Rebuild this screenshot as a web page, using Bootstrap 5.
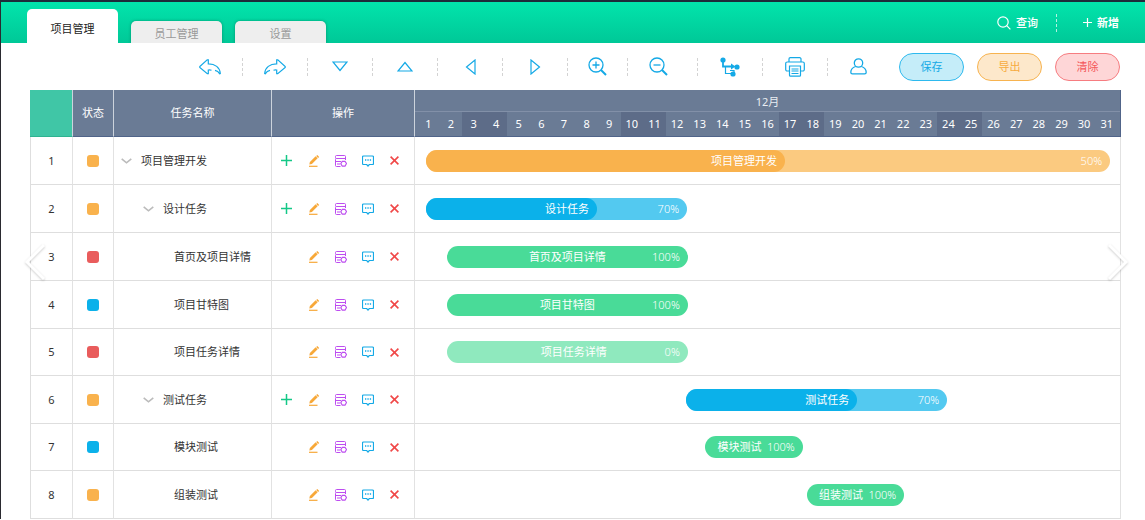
<!DOCTYPE html>
<html lang="zh-CN">
<head>
<meta charset="utf-8">
<meta name="viewport" content="width=device-width, initial-scale=1">
<title>项目管理</title>
<link href="https://cdn.jsdelivr.net/npm/bootstrap@5.3.0/dist/css/bootstrap.min.css" rel="stylesheet">
<style>
  body { font: 11px/16px "Noto Sans", "Noto Sans CJK SC", sans-serif; color: #333; background: #fff; border-top: 2px solid #1d2b3a; border-left: 1px solid #2a2a30; overflow: hidden; }
  button, .btn { font: inherit; }
  svg { display: block; fill: none; stroke: currentColor; }
  .icon-btn { border: 0; background: none; padding: 0; color: inherit; }

  .topbar { background: linear-gradient(#02e4ac, #00c897); height: 41px; padding: 0 26px; overflow: hidden; }
  .page-tabs { gap: 13px; }
  .page-tabs .nav-link { width: 91px; height: 22px; padding: 5px 0 0; text-align: center; color: #999; background: #eee; border-radius: 5px 5px 0 0; box-shadow: 0 0 3px rgba(0, 70, 50, .45); }
  .page-tabs .nav-link.active { height: 34px; padding-top: 12px; color: #222; background: #fff; box-shadow: none; }
  .top-link { color: #fff; text-decoration: none; gap: 5px; }
  .top-rule { height: 18px; border-left: 1px dashed rgba(255, 255, 255, .7); margin: 0 26px 0 18px; }

  .toolbar { height: 47px; padding-right: 25px; color: #14a9e6; }
  .tool { width: 65px; height: 18px; border-right: 1px dashed #d3d3d3; }
  .tool.narrow { width: 60px; }
  .tool.group-end { width: 70px; padding-right: 8px; }
  .tool:last-child { border-right: 0; }
  .actions { gap: 13px; margin-left: 11px; }
  .actions .btn { width: 65px; height: 28px; padding: 0; border-radius: 14px; }
  .btn-save { --bs-btn-color: #14a9e6; --bs-btn-bg: #c5edf9; --bs-btn-border-color: #2db9ee; }
  .btn-export { --bs-btn-color: #f7ab40; --bs-btn-bg: #fde8cb; --bs-btn-border-color: #f7b34f; }
  .btn-clear { --bs-btn-color: #f4565a; --bs-btn-bg: #fed6d7; --bs-btn-border-color: #f67c80; }

  .plan { padding: 0 24px 0 29px; }
  .gantt { width: 100%; table-layout: fixed; border-collapse: separate; border-spacing: 0; }
  .gantt th, .gantt td { padding: 0; vertical-align: middle; border-right: 1px solid #e2e2e2; }
  .gantt thead th { height: 47px; font-weight: 400; text-align: center; color: #fff; background: #6a7b95; border-right-color: #ccd3dc; border-bottom: 1px solid #506489; }
  .gantt thead th.corner { background: #40c6a6; border-bottom-color: #2fb391; }
  .gantt thead th.timeline { border-right-color: #506489; }
  .gantt tbody td { height: 48px; border-bottom: 1px solid #dedede; }
  .gantt tbody tr:nth-child(5) td, .gantt tbody tr:nth-child(7) td { height: 47px; }
  .gantt td:first-child { border-left: 1px solid #dedede; }
  .c-num { width: 43px; } .c-state { width: 41px; } .c-name { width: 158px; } .c-ops { width: 143px; }
  .month { height: 22px; line-height: 24px; border-bottom: 1px solid #8290a8; color: #e9edf2; }
  .days { display: grid; grid-template-columns: repeat(31, 1fr); padding: 0 2px; line-height: 24px; }
  .days .weekend { background: #5d6c88; }

  .state { width: 12px; height: 12px; border-radius: 3px; margin: 0 auto; }
  .orange { background: #f9b24d; } .red { background: #e95c5c; } .blue { background: #0bb1ea; } .green { background: #49db98; }
  .light-orange { background: #fbca80; } .light-blue { background: #53c9f0; } .light-green { background: #8fe9be; }
  .level-0 { padding-left: 7px; } .level-1 { padding-left: 29px; } .level-2 { padding-left: 60px; }
  .task-name { gap: 9px; }
  .task-name .icon-btn { color: #bbb; }
  .ops { display: grid; grid-template-columns: repeat(5, 27px); justify-items: center; align-items: center; padding-left: 1px; }
  .op-add { color: #14c887; } .op-edit { color: #f7a838; } .op-log { color: #bd4df0; } .op-talk { color: #14a9e6; } .op-del { color: #f04848; }

  .bar { height: 22px; border-radius: 11px; color: #fff; }
  .bar-fill { height: 22px; border-radius: 11px; padding-right: 8px; }
  .bar-pct { padding-right: 8px; font-weight: 300; }
  .bar-title { padding-left: 12px; }
  .bar-title.centered { padding-left: 36px; text-align: center; }

  .slide { position: fixed; top: calc(50% + 2px); transform: translateY(-50%); color: #fff; filter: drop-shadow(0 1px 1px rgba(0, 0, 0, .2)); }
  .slide-prev { left: 24px; } .slide-next { right: 16px; }
</style>
</head>
<body>
<svg width="0" height="0" class="position-absolute" aria-hidden="true">
  <symbol id="i-down" viewBox="0 0 11 6"><path d="M.7.8l4.8 4 4.8-4" stroke-width="1.6"/></symbol>
  <symbol id="i-add" viewBox="0 0 11 11"><path d="M5.500 0v11M0 5.500h11" stroke-width="1.500"/></symbol>
  <symbol id="i-edit" viewBox="0 0 12 12"><path d="M1 11.300h8.500" stroke-width="1.200"/><path d="M1.300 9.600l.6-2.600L7.600 1.300l2 2L3.900 9z" fill="currentColor" stroke="none"/><path d="M8.200.9L9.300 0l1.900 1.900-1.100 1z" fill="currentColor" stroke="none"/></symbol>
  <symbol id="i-log" viewBox="0 0 12 12"><path d="M10.500 5V1.500a1 1 0 0 0-1-1h-8a1 1 0 0 0-1 1v1a1 1 0 0 0 1 1h9M1.500 3.500a1 1 0 0 0-1 1v6a1 1 0 0 0 1 1H5.500M.5 6.500H6M2 9h3"/><path d="M7.300 6.300h2.700l1.500 2.200L10 11.200H7.300L5.800 8.700z" stroke-width="1.200"/></symbol>
  <symbol id="i-talk" viewBox="0 0 12 12"><path d="M1.500 1h9a1 1 0 0 1 1 1v6.500a1 1 0 0 1-1 1H7.300L6 11 4.700 9.500H1.500a1 1 0 0 1-1-1V2a1 1 0 0 1 1-1z" stroke-width="1.200"/><path d="M3 5h1.300M5.400 5h1.300M7.800 5h1.300" stroke-width="1.300"/></symbol>
  <symbol id="i-del" viewBox="0 0 9 9"><path d="M.6.6l7.800 7.800M8.400.6L.6 8.400" stroke-width="1.600"/></symbol>
</svg>

<header class="topbar d-flex justify-content-between">
  <nav class="page-tabs nav align-items-end">
    <a class="nav-link active" href="#" aria-current="page">项目管理</a>
    <a class="nav-link" href="#">员工管理</a>
    <a class="nav-link" href="#">设置</a>
  </nav>
  <div class="d-flex align-items-center">
    <a class="top-link d-flex align-items-center fw-medium" href="#"><svg width="14" height="14" viewBox="0 0 14 14"><circle cx="6" cy="6" r="5.200" stroke-width="1.200"/><path d="M9.700 9.700l3.700 3.700" stroke-width="1.200"/></svg>查询</a>
    <span class="top-rule"></span>
    <a class="top-link d-flex align-items-center fw-bold" href="#"><svg width="9" height="9" viewBox="0 0 9 9"><path d="M4.500 0v9M0 4.500h9" stroke-width="1.200"/></svg>新增</a>
  </div>
</header>

<main>
  <div class="toolbar d-flex align-items-center justify-content-end">
    <div class="d-flex" role="toolbar" aria-label="工具">
      <button class="icon-btn tool d-flex align-items-center justify-content-center" aria-label="撤销"><svg width="22" height="16" viewBox="0 0 22 16"><path d="M12.500 11.200c-1-.3-2-.3-3.200-.2v3.600h-1L.8 8.400V7.500L8.200.9h1.100v3.900c6.800-.1 11.600 3.800 12 9.700l-.7.300c-1-2-2.600-3-4.600-3.400" stroke-width="1.200"/></svg></button>
      <button class="icon-btn tool d-flex align-items-center justify-content-center" aria-label="重做"><svg width="22" height="16" viewBox="0 0 22 16"><path d="M9.500 11.200c1-.3 2-.3 3.200-.2v3.600h1l7.500-6.200V7.500L13.800.9h-1.100v3.900C5.900 4.700 1.100 8.600.7 14.500l.7.300c1-2 2.600-3 4.600-3.400" stroke-width="1.200"/></svg></button>
      <button class="icon-btn tool d-flex align-items-center justify-content-center" aria-label="下移"><svg width="16" height="11" viewBox="0 0 16 11"><path d="M1 1h14L8 9.500z" stroke-width="1.200"/></svg></button>
      <button class="icon-btn tool d-flex align-items-center justify-content-center" aria-label="上移"><svg width="16" height="11" viewBox="0 0 16 11"><path d="M1 10h14L8 1.500z" stroke-width="1.200"/></svg></button>
      <button class="icon-btn tool d-flex align-items-center justify-content-center" aria-label="左移"><svg width="11" height="16" viewBox="0 0 11 16"><path d="M10 1v14L1.500 8z" stroke-width="1.200"/></svg></button>
      <button class="icon-btn tool d-flex align-items-center justify-content-center" aria-label="右移"><svg width="11" height="16" viewBox="0 0 11 16"><path d="M1 1v14l8.500-7z" stroke-width="1.200"/></svg></button>
      <button class="icon-btn tool narrow d-flex align-items-center justify-content-center" aria-label="放大"><svg width="19" height="19" viewBox="0 0 19 19"><circle cx="8" cy="8" r="7" stroke-width="1.300"/><path d="M8 4.500v7M4.500 8h7" stroke-width="1.300"/><path d="M13 13l5 5" stroke-width="2"/></svg></button>
      <button class="icon-btn tool group-end d-flex align-items-center justify-content-center" aria-label="缩小"><svg width="19" height="19" viewBox="0 0 19 19"><circle cx="8" cy="8" r="7" stroke-width="1.300"/><path d="M4.500 8h7" stroke-width="1.300"/><path d="M13 13l5 5" stroke-width="2"/></svg></button>
      <button class="icon-btn tool d-flex align-items-center justify-content-center" aria-label="层级"><svg width="20" height="20" viewBox="0 0 20 20"><circle cx="3" cy="3" r="2.600" fill="currentColor" stroke="none"/><circle cx="17" cy="10" r="2.600" fill="currentColor" stroke="none"/><circle cx="13" cy="17" r="2.600" fill="currentColor" stroke="none"/><path d="M3 4v5.500h9" stroke-width="1.800"/><path d="M11 6.500l4.500 3L11 12.500z" fill="currentColor" stroke="none"/><path d="M5.500 10v6.500H11M10 13.500h4V16" stroke-width="1.200"/></svg></button>
      <button class="icon-btn tool d-flex align-items-center justify-content-center" aria-label="打印"><svg width="20" height="20" viewBox="0 0 20 20"><path d="M4 5V2a1.300 1.300 0 0 1 1.300-1.300h9.400A1.300 1.300 0 0 1 16 2v3M4.500 14H2.200A1.500 1.500 0 0 1 .7 12.500v-6A1.500 1.500 0 0 1 2.200 5h15.600a1.500 1.500 0 0 1 1.500 1.500v6a1.500 1.500 0 0 1-1.500 1.500h-2.300M4.500 9h11v9.200a1 1 0 0 1-1 1h-9a1 1 0 0 1-1-1zM6.500 12h7M6.500 14h7M6.500 16.500h7" stroke-width="1.200"/></svg></button>
      <button class="icon-btn tool narrow d-flex align-items-center justify-content-center" aria-label="成员"><svg width="17" height="17" viewBox="0 0 17 17"><path d="M5.700 8.500C2.500 9.500.8 11.500.8 14.300c0 1 .6 1.600 1.600 1.600h12.200c1 0 1.600-.6 1.600-1.600 0-2.800-1.700-4.800-4.900-5.800" stroke-width="1.300"/><circle cx="8.500" cy="5" r="4.200" stroke-width="1.300"/></svg></button>
    </div>
    <div class="actions d-flex">
      <button class="btn btn-save">保存</button>
      <button class="btn btn-export">导出</button>
      <button class="btn btn-clear">清除</button>
    </div>
  </div>

  <div class="plan">
    <table class="gantt">
      <thead>
        <tr>
          <th class="corner c-num" aria-label="序号"></th>
          <th class="c-state">状态</th>
          <th class="c-name">任务名称</th>
          <th class="c-ops">操作</th>
          <th class="timeline align-top"><div class="month">12月</div><div class="days" id="days"></div></th>
        </tr>
      </thead>
      <tbody id="tasks"></tbody>
    </table>
  </div>
</main>

<button class="icon-btn slide slide-prev" aria-label="上一张"><svg width="22" height="38" viewBox="0 0 22 38"><path d="M20 2L3 19l17 17" stroke-width="3"/></svg></button>
<button class="icon-btn slide slide-next" aria-label="下一张"><svg width="22" height="38" viewBox="0 0 22 38"><path d="M2 2l17 17L2 36" stroke-width="3"/></svg></button>

<script src="https://cdn.jsdelivr.net/npm/bootstrap@5.3.0/dist/js/bootstrap.bundle.min.js"></script>
<script>
  const weekend = [3, 4, 10, 11, 17, 18, 24, 25];
  document.getElementById('days').innerHTML = Array.from({ length: 31 }, (_, i) =>
    `<span class="${weekend.includes(i + 1) ? 'weekend' : ''}">${i + 1}</span>`).join('');

  // start, width: share of the month; fill: finished share of the bar
  const tasks = [
    { name: '项目管理开发', level: 0, state: 'orange', bar: 'orange', start: 1.5, width: 97.1, fill: 52.5, pct: 50 },
    { name: '设计任务', level: 1, state: 'orange', bar: 'blue', start: 1.6, width: 37, fill: 65.5, pct: 70 },
    { name: '首页及项目详情', level: 2, state: 'red', bar: 'green', start: 4.5, width: 34.2, pct: 100 },
    { name: '项目甘特图', level: 2, state: 'blue', bar: 'green', start: 4.5, width: 34.2, pct: 100 },
    { name: '项目任务详情', level: 2, state: 'red', bar: 'light-green', start: 4.5, width: 34.2, pct: 0 },
    { name: '测试任务', level: 1, state: 'orange', bar: 'blue', start: 38.5, width: 37, fill: 65.5, pct: 70 },
    { name: '模块测试', level: 2, state: 'blue', bar: 'green', start: 41.2, width: 13.8, pct: 100 },
    { name: '组装测试', level: 2, state: 'orange', bar: 'green', start: 55.6, width: 13.8, pct: 100 }
  ];
  const icon = (id, w, h) => `<svg width="${w}" height="${h}" aria-hidden="true"><use href="#i-${id}"/></svg>`;
  const op = (cls, label, svg) => `<button class="icon-btn op-${cls}" aria-label="${label}">${svg}</button>`;
  const bar = t => {
    const pct = `<span class="bar-pct">${t.pct}%</span>`;
    const box = `style="margin-left:${t.start}%;width:${t.width}%"`;
    return t.fill
      ? `<div class="bar light-${t.bar} d-flex align-items-center justify-content-between" ${box}><div class="bar-fill ${t.bar} d-flex align-items-center justify-content-end" style="width:${t.fill}%">${t.name}</div>${pct}</div>`
      : `<div class="bar ${t.bar} d-flex align-items-center" ${box}><span class="bar-title flex-grow-1 ${t.width > 20 ? 'centered' : ''}">${t.name}</span>${pct}</div>`;
  };
  document.getElementById('tasks').innerHTML = tasks.map((t, i) => `
    <tr>
      <td class="text-center">${i + 1}</td>
      <td><div class="state ${t.state}"></div></td>
      <td><div class="task-name level-${t.level} d-flex align-items-center">${t.level < 2 ? `<button class="icon-btn" aria-label="折叠">${icon('down', 11, 6)}</button>` : ''}<span>${t.name}</span></div></td>
      <td><div class="ops">${t.level < 2 ? op('add', '添加', icon('add', 11, 11)) : '<span></span>'}${op('edit', '编辑', icon('edit', 12, 12))}${op('log', '记录', icon('log', 12, 12))}${op('talk', '评论', icon('talk', 12, 12))}${op('del', '删除', icon('del', 9, 9))}</div></td>
      <td>${bar(t)}</td>
    </tr>`).join('');
</script>
</body>
</html>
